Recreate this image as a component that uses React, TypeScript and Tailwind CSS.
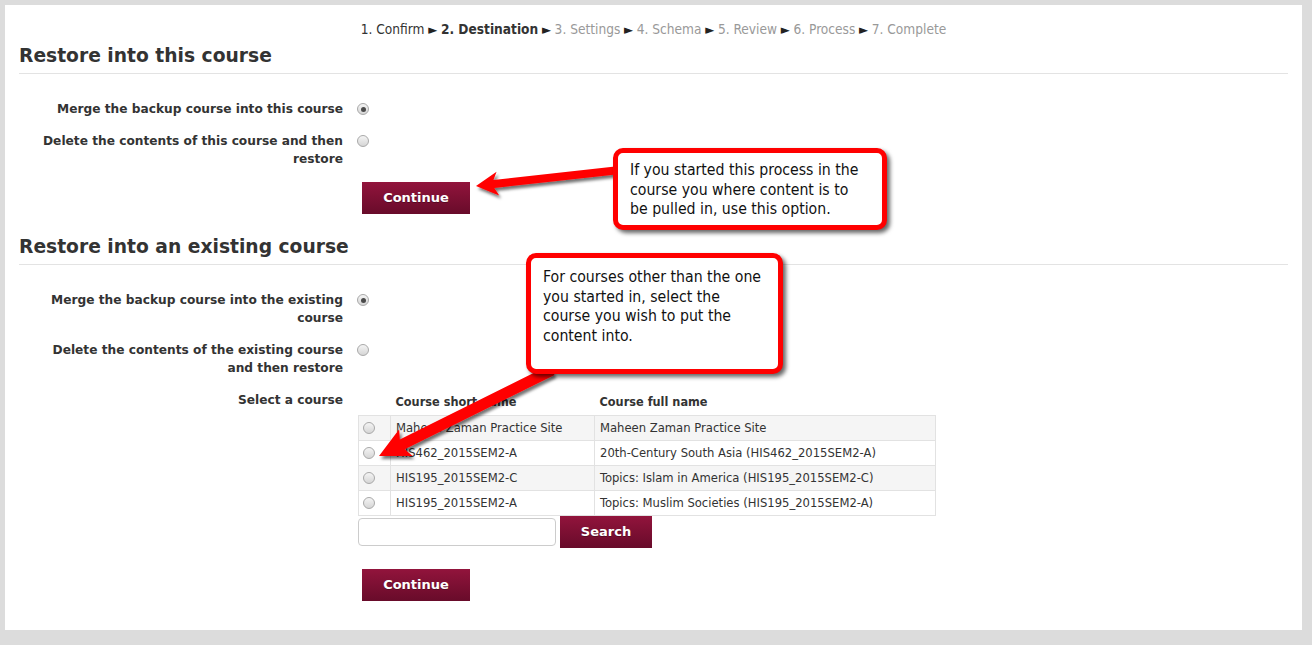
import React from "react";

const VERDANA = "font-['DejaVu_Sans',Verdana,sans-serif]";
const TAHOMA = "font-['DejaVu_Sans_Condensed','DejaVu_Sans',Tahoma,sans-serif] [font-stretch:condensed]";

const STEPS: { label: string; state: "done" | "current" | "todo" }[] = [
  { label: "1. Confirm", state: "done" },
  { label: "2. Destination", state: "current" },
  { label: "3. Settings", state: "todo" },
  { label: "4. Schema", state: "todo" },
  { label: "5. Review", state: "todo" },
  { label: "6. Process", state: "todo" },
  { label: "7. Complete", state: "todo" },
];

const COURSES = [
  { short: "Maheen Zaman Practice Site", full: "Maheen Zaman Practice Site" },
  { short: "HIS462_2015SEM2-A", full: "20th-Century South Asia (HIS462_2015SEM2-A)" },
  { short: "HIS195_2015SEM2-C", full: "Topics: Islam in America (HIS195_2015SEM2-C)" },
  { short: "HIS195_2015SEM2-A", full: "Topics: Muslim Societies (HIS195_2015SEM2-A)" },
];

function Radio({ checked = false }: { checked?: boolean }) {
  return (
    <span className="flex h-[12px] w-[12px] items-center justify-center rounded-full border border-[#a9a9a9] bg-gradient-to-b from-[#f4f4f4] to-[#d6d6d6]">
      {checked && <span className="h-[5px] w-[5px] rounded-full bg-[#4a4a4a]" />}
    </span>
  );
}

function MoodleButton({ label, w }: { label: string; w: string }) {
  return (
    <button
      className={`${w} h-[32px] bg-gradient-to-b from-[#92143c] to-[#680b2a] text-white font-bold text-[13px] ${VERDANA} [text-shadow:0_1px_0_rgba(0,0,0,0.3)]`}
    >
      {label}
    </button>
  );
}

function Row({ label, children }: { label: React.ReactNode; children: React.ReactNode }) {
  return (
    <div className="flex">
      <div className={`w-[324px] text-right font-bold text-[12.2px] leading-[18px] text-[#333] ${VERDANA}`}>{label}</div>
      <div className="ml-[15px]">{children}</div>
    </div>
  );
}

function Heading({ children }: { children: React.ReactNode }) {
  return (
    <h2 className={`border-b border-[#e3e3e3] pb-[5px] text-[18.7px] leading-[24px] font-bold text-[#333] ${VERDANA}`}>
      {children}
    </h2>
  );
}

function arrow(tx: number, ty: number, hx: number, hy: number, shaft: number, headW: number, headL: number) {
  const dx = hx - tx;
  const dy = hy - ty;
  const len = Math.hypot(dx, dy);
  const ux = dx / len;
  const uy = dy / len;
  const nx = -uy;
  const ny = ux;
  const bx = hx - ux * headL;
  const by = hy - uy * headL;
  const pts = [
    [tx + (nx * shaft) / 2, ty + (ny * shaft) / 2],
    [bx + (nx * shaft) / 2 + ux * 4, by + (ny * shaft) / 2 + uy * 4],
    [bx + (nx * headW) / 2, by + (ny * headW) / 2],
    [hx, hy],
    [bx - (nx * headW) / 2, by - (ny * headW) / 2],
    [bx - (nx * shaft) / 2 + ux * 4, by - (ny * shaft) / 2 + uy * 4],
    [tx - (nx * shaft) / 2, ty - (ny * shaft) / 2],
  ];
  return pts.map((p) => p.join(",")).join(" ");
}

function Callout({ className, lines }: { className: string; lines: string[] }) {
  return (
    <div
      className={`absolute rounded-[10px] border-[5px] border-[#ff0000] bg-white px-[12px] shadow-[3px_3px_4px_rgba(0,0,0,0.6)] text-[15.7px] leading-[19.5px] text-[#111] ${TAHOMA} ${className}`}
    >
      {lines.map((l) => (
        <div key={l}>{l}</div>
      ))}
    </div>
  );
}

export default function App() {
  return (
    <div className="relative h-[645px] w-[1312px] overflow-hidden bg-[#dcdcdc] pl-[5px] pt-[5px]">
      <div className="h-[625px] w-[1297px] bg-white px-[14px] pt-[15px]">
        {/* progress */}
        <div className={`h-[18px] text-center text-[13.6px] leading-[18px] ${TAHOMA}`}>
          {STEPS.map((s, i) => (
            <span key={s.label}>
              <span
                className={
                  s.state === "current"
                    ? "font-bold text-[#333]"
                    : s.state === "done"
                      ? "text-[#333]"
                      : "text-[#999]"
                }
              >
                {s.label}
              </span>
              {i < STEPS.length - 1 && <span className="text-[#222] text-[13px]"> ► </span>}
            </span>
          ))}
        </div>

        <div className="mt-[6px]">
          <Heading>Restore into this course</Heading>
        </div>

        <div className="mt-[26px] flex flex-col gap-[14px]">
          <Row label="Merge the backup course into this course">
            <div className="mt-[3px] -ml-[1px]">
              <Radio checked />
            </div>
          </Row>
          <Row
            label={
              <>
                Delete the contents of this course and then
                <br />
                restore
              </>
            }
          >
            <div className="mt-[3px] -ml-[1px]">
              <Radio />
            </div>
          </Row>
          <Row label="">
            <div className="ml-[4px]">
              <MoodleButton label="Continue" w="w-[108px]" />
            </div>
          </Row>
        </div>

        <div className="mt-[21px]">
          <Heading>Restore into an existing course</Heading>
        </div>

        <div className="mt-[26px] flex flex-col gap-[14px]">
          <Row
            label={
              <>
                Merge the backup course into the existing
                <br />
                course
              </>
            }
          >
            <div className="mt-[3px] -ml-[1px]">
              <Radio checked />
            </div>
          </Row>
          <Row
            label={
              <>
                Delete the contents of the existing course
                <br />
                and then restore
              </>
            }
          >
            <div className="mt-[3px] -ml-[1px]">
              <Radio />
            </div>
          </Row>
          <Row label="Select a course">
            <table className={`w-[578px] border-collapse text-[12.9px] text-[#333] ${TAHOMA}`}>
              <thead>
                <tr className="h-[24px]">
                  <th className="w-[32px]" />
                  <th className={`w-[204px] pl-[5px] text-left text-[12.6px] font-bold ${VERDANA}`}>Course short name</th>
                  <th className={`pl-[5px] text-left text-[12.6px] font-bold ${VERDANA}`}>Course full name</th>
                </tr>
              </thead>
              <tbody>
                {COURSES.map((c, i) => (
                  <tr key={c.short} className={`h-[25px] ${i % 2 === 0 ? "bg-[#f5f5f5]" : "bg-white"}`}>
                    <td className="border border-[#e2e2e2] pl-[4px]">
                      <Radio />
                    </td>
                    <td className="border border-[#e2e2e2] pl-[5px]">{c.short}</td>
                    <td className="border border-[#e2e2e2] pl-[5px]">{c.full}</td>
                  </tr>
                ))}
              </tbody>
            </table>
            <div className="flex items-center gap-[4px]">
              <input className="h-[28px] w-[198px] rounded-[4px] border border-[#ccc] bg-white" />
              <MoodleButton label="Search" w="w-[92px]" />
            </div>
            <div className="ml-[4px] mt-[21px]">
              <MoodleButton label="Continue" w="w-[108px]" />
            </div>
          </Row>
        </div>
      </div>

      <svg className="pointer-events-none absolute left-0 top-0" width="1312" height="645">
        <defs>
          <filter id="sh" x="-20%" y="-20%" width="140%" height="140%">
            <feDropShadow dx="2" dy="3" stdDeviation="1.6" floodColor="#000" floodOpacity="0.55" />
          </filter>
        </defs>
        <polygon points={arrow(620, 170, 476, 186, 8, 24, 22)} fill="#ff0000" filter="url(#sh)" />
        <polygon points={arrow(552, 370, 379, 456, 11, 30, 30)} fill="#ff0000" filter="url(#sh)" />
      </svg>

      <Callout
        className="left-[613px] top-[148px] h-[82px] w-[274px] pt-[7px]"
        lines={["If you started this process in the", "course you where content is to", "be pulled in, use this option."]}
      />
      <Callout
        className="left-[526px] top-[253px] h-[121px] w-[257px] pt-[9px]"
        lines={["For courses other than the one", "you started in, select the", "course you wish to put the", "content into."]}
      />
    </div>
  );
}
